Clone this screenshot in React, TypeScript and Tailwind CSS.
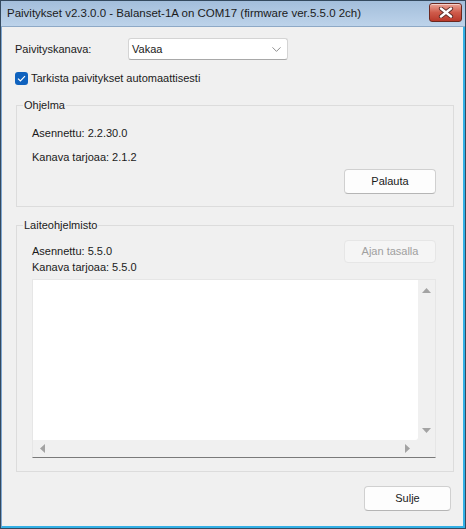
import { ChevronDown } from "lucide-react";

const FONT = "font-['Liberation_Sans',Arial,sans-serif]";

function Btn({ label, disabled, className }: { label: string; disabled?: boolean; className: string }) {
  return (
    <div
      className={
        "flex items-center justify-center rounded-[4px] border " +
        (disabled
          ? "bg-[#f5f5f5] border-[#e6e6e6] text-[#a0a0a0] "
          : "bg-[#fdfdfd] border-[#d0d0d0] border-b-[#b5b5b5] text-[#1a1a1a] ") +
        className
      }
    >
      {label}
    </div>
  );
}

function Tri({ dir }: { dir: "up" | "down" | "left" | "right" }) {
  const pts = {
    up: "0,6 4.5,1 9,6",
    down: "0,1 4.5,6 9,1",
    left: "6,0 1,4.5 6,9",
    right: "1,0 6,4.5 1,9",
  }[dir];
  const vertical = dir === "up" || dir === "down";
  const w = vertical ? 9 : 7;
  const h = vertical ? 7 : 9;
  return (
    <svg width={w} height={h} viewBox={`0 0 ${w} ${h}`}>
      <polygon points={pts} fill="#a3a3a3" />
    </svg>
  );
}

function Group({ title, className, children }: { title: string; className: string; children: React.ReactNode }) {
  return (
    <div className={"relative w-[438px] border border-[#dcdcdc] " + className}>
      <span className="absolute -top-[8px] left-[6px] px-[1px] bg-[#f0f0f0] leading-[14px]">{title}</span>
      {children}
    </div>
  );
}

export default function App() {
  return (
    <div className={`w-[466px] h-[529px] flex flex-col border border-[#34495e] bg-[#f0f0f0] ${FONT} text-[11px] text-[#1a1a1a]`}>
      {/* Title bar */}
      <div className="h-[26px] shrink-0 flex items-center justify-between pl-[6px] pr-[3px] bg-gradient-to-b from-[#a3bedb] to-[#bdd3ea] border-b border-[#8ea9c6]">
        <span className="text-[11.5px] text-[#1b1b1b]">
          Paivitykset v2.3.0.0 - Balanset-1A on COM17 (firmware ver.5.5.0 2ch)
        </span>
        <div className="w-[33px] h-[19px] mb-[2px] rounded-[3px] border border-[#6b2820] bg-gradient-to-b from-[#e9a396] via-[#cf5b4b] to-[#b9382a] flex items-center justify-center shadow-[inset_0_1px_0_rgba(255,255,255,0.5)]">
          <svg width="16" height="11" viewBox="0 0 16 11">
            <path d="M3 1.5 L13 9.5 M13 1.5 L3 9.5" stroke="#5a2a26" strokeWidth="4.2" strokeLinecap="round" />
            <path d="M3 1.5 L13 9.5 M13 1.5 L3 9.5" stroke="#ffffff" strokeWidth="2.4" strokeLinecap="round" />
          </svg>
        </div>
      </div>

      {/* Client area */}
      <div className="flex-1 flex flex-col pl-[13px] pr-[12px] border-l border-[#7fa7d2] border-r-2 border-r-[#33b0e6] border-b-2 border-b-[#33b0e6]">
        {/* channel */}
        <div className="mt-[11px] h-[22px] flex items-center">
          <span className="w-[113px]">Paivityskanava:</span>
          <div className="w-[160px] h-[22px] bg-white border border-[#d4d4d4] border-b-[#a8a8a8] rounded-[3px] flex items-center justify-between pl-[3px] pr-[3px]">
            <span>Vakaa</span>
            <ChevronDown size={15} strokeWidth={1.1} color="#5c5c5c" />
          </div>
        </div>

        {/* checkbox */}
        <div className="mt-[12px] h-[13px] flex items-center gap-[3px]">
          <div className="w-[13px] h-[13px] rounded-[3px] bg-[#0f62be] flex items-center justify-center">
            <svg width="9" height="7" viewBox="0 0 9 7">
              <path d="M1 3.6 L3.4 6 L8 1.2" stroke="white" strokeWidth="1.2" fill="none" />
            </svg>
          </div>
          <span>Tarkista paivitykset automaattisesti</span>
        </div>

        {/* Ohjelma */}
        <Group title="Ohjelma" className="mt-[20px] ml-[1px] h-[102px] pt-[20px] pl-[15px] pr-[17px]">
          <div className="leading-[14px]">Asennettu: 2.2.30.0</div>
          <div className="mt-[10px] leading-[14px]">Kanava tarjoaa: 2.1.2</div>
          <div className="mt-[5px] flex justify-end">
            <Btn label="Palauta" className="w-[92px] h-[25px]" />
          </div>
        </Group>

        {/* Laiteohjelmisto */}
        <Group title="Laiteohjelmisto" className="mt-[18px] ml-[1px] h-[247px] pt-[14px] pl-[15px] pr-[17px]">
          <div className="flex justify-between">
            <div className="flex flex-col gap-[2px] pt-[4px]">
              <div className="leading-[14px]">Asennettu: 5.5.0</div>
              <div className="leading-[14px]">Kanava tarjoaa: 5.5.0</div>
            </div>
            <Btn label="Ajan tasalla" disabled className="w-[92px] h-[23px]" />
          </div>
          {/* log box */}
          <div className="mt-[5px] h-[179px] w-[404px] flex flex-col border-t border-x border-[#e6e6e6] border-b border-b-[#7a7a7a] bg-[#f0f0f0]">
            <div className="flex-1 flex">
              <div className="flex-1 bg-white rounded-br-[3px]" />
              <div className="w-[17px] flex flex-col items-center justify-between pt-[7px] pb-[6px]">
                <Tri dir="up" />
                <Tri dir="down" />
              </div>
            </div>
            <div className="h-[17px] flex items-center justify-between pl-[6px] pr-[24px]">
              <Tri dir="left" />
              <Tri dir="right" />
            </div>
          </div>
        </Group>

        {/* bottom */}
        <div className="mt-[14px] flex justify-end">
          <Btn label="Sulje" className="w-[87px] h-[25px]" />
        </div>
      </div>
    </div>
  );
}
